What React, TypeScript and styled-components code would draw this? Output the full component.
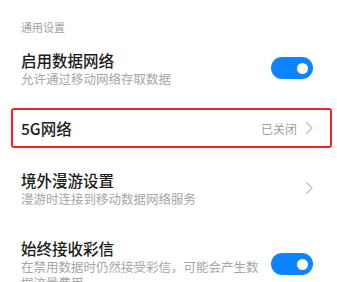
import React from 'react';
import styled, { createGlobalStyle } from 'styled-components';

const GlobalStyle = createGlobalStyle`
  html, body {
    margin: 0;
    padding: 0;
    background: #ffffff;
  }
  body {
    font-family: "Noto Sans CJK SC", "Noto Sans", sans-serif;
    -webkit-font-smoothing: antialiased;
  }
`;

interface ToggleProps {
  on: boolean;
}

const Toggle = ({ on }: ToggleProps) => (
  <Track $on={on}>
    <Knob $on={on} />
  </Track>
);

const Chevron = () => (
  <ChevronIcon viewBox="0 0 7 12" width="7" height="12">
    <path d="M1 1 L6 6 L1 11" fill="none" stroke="#bdbdbd" strokeWidth="1.3" strokeLinecap="round" strokeLinejoin="round" />
  </ChevronIcon>
);

export default function App() {
  return (
    <Page>
      <GlobalStyle />
      <SectionHeader>通用设置</SectionHeader>

      <Row>
        <Texts>
          <Title>启用数据网络</Title>
          <Subtitle>允许通过移动网络存取数据</Subtitle>
        </Texts>
        <Toggle on />
      </Row>

      <HighlightRow>
        <HighlightBox>
          <Title>5G网络</Title>
          <Value>已关闭</Value>
          <Chevron />
        </HighlightBox>
      </HighlightRow>

      <Row>
        <Texts>
          <Title>境外漫游设置</Title>
          <Subtitle>漫游时连接到移动数据网络服务</Subtitle>
        </Texts>
        <Chevron />
      </Row>

      <Row $tall>
        <Texts>
          <Title>始终接收彩信</Title>
          <Subtitle>在禁用数据时仍然接受彩信，可能会产生数据流量费用</Subtitle>
        </Texts>
        <Toggle on />
      </Row>
    </Page>
  );
}

const Page = styled.div`
  width: 337px;
  height: 282px;
  overflow: hidden;
  background: #ffffff;
`;

const SectionHeader = styled.div`
  padding: 20px 21px 4px;
  font-size: 11px;
  line-height: 14px;
  color: #a3a3a3;
`;

const Row = styled.div<{ $tall?: boolean }>`
  display: flex;
  align-items: center;
  box-sizing: border-box;
  min-height: 60px;
  padding: ${p => (p.$tall ? '19px' : '11px')} 24px 11px 21px;
`;

const Texts = styled.div`
  flex: 1;
  min-width: 0;
  margin-right: 10px;
`;

const Title = styled.div`
  font-size: 15.5px;
  line-height: 22px;
  color: #1c1c1c;
  font-weight: 500;
`;

const Subtitle = styled.div`
  font-size: 12.5px;
  line-height: 16px;
  color: #a6a6a6;
`;

const HighlightRow = styled.div`
  padding: 10px 5px 10px 11px;
`;

const HighlightBox = styled.div`
  display: flex;
  align-items: center;
  box-sizing: border-box;
  height: 40px;
  padding: 0 17px 0 8px;
  border: 2px solid #ec2622;
  border-radius: 3px;

  ${Title} {
    flex: 1;
  }
`;

const Value = styled.span`
  font-size: 12px;
  color: #9e9e9e;
  margin-right: 9px;
`;

const ChevronIcon = styled.svg`
  display: block;
  flex-shrink: 0;
`;

const Track = styled.div<{ $on: boolean }>`
  position: relative;
  flex-shrink: 0;
  width: 42px;
  height: 22px;
  border-radius: 11px;
  background: ${p => (p.$on ? '#0d84ff' : '#dcdcdc')};
`;

const Knob = styled.div<{ $on: boolean }>`
  position: absolute;
  top: 5.5px;
  ${p => (p.$on ? 'right: 5.5px;' : 'left: 5.5px;')}
  width: 11px;
  height: 11px;
  border-radius: 50%;
  background: #ffffff;
`;
